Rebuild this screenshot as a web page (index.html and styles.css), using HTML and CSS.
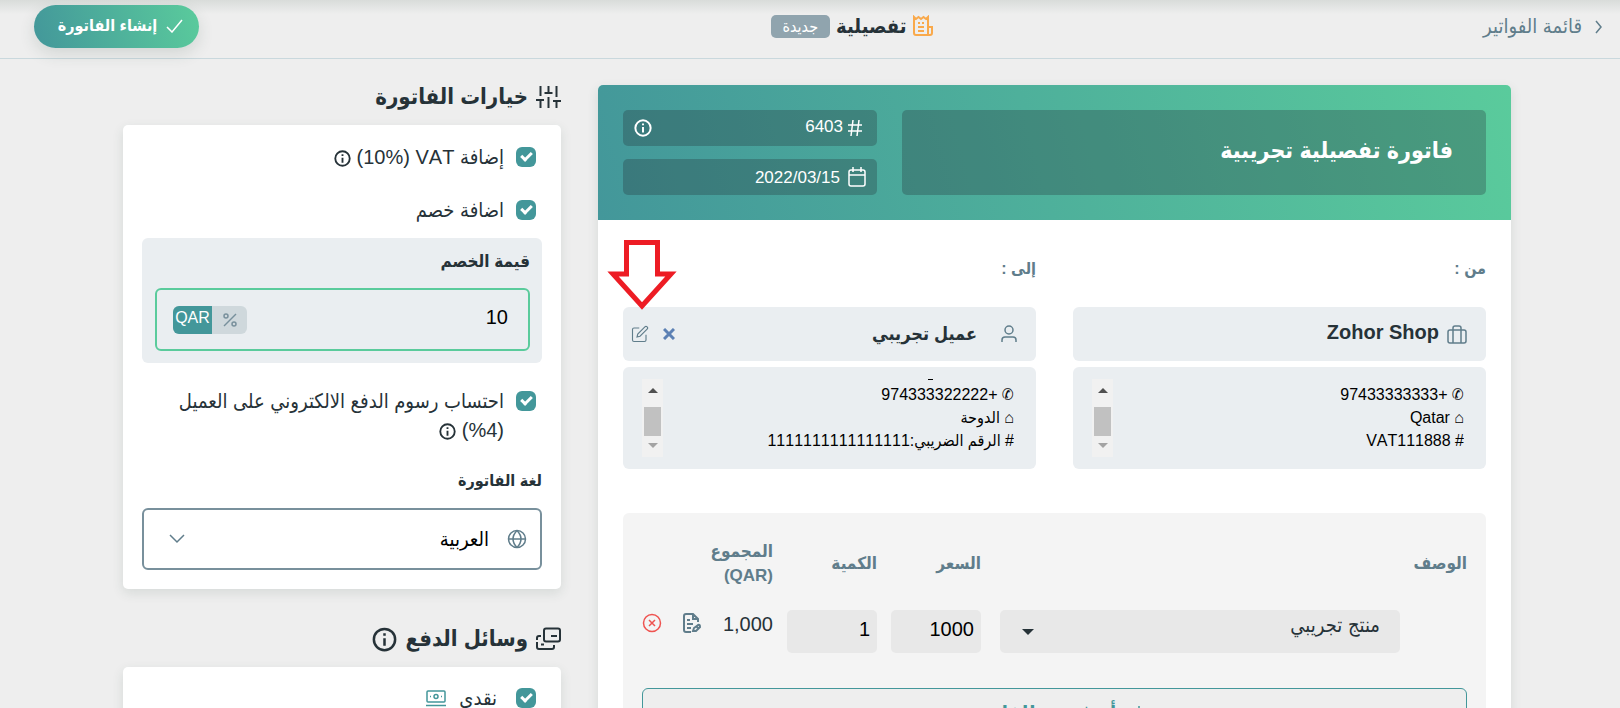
FILE: index.html
```html
<!DOCTYPE html>
<html lang="ar" dir="rtl">
<head>
<meta charset="utf-8">
<title>فاتورة تفصيلية</title>
<link rel="stylesheet" href="styles.css">
</head>
<body>
<header class="topbar">
  <a class="back" href="#">
    <svg class="icon" width="10" height="14" viewBox="0 0 10 14"><path d="M2 1l5 6-5 6"/></svg>
    قائمة الفواتير
  </a>
  <div class="doc-type">
    <svg class="icon doc-icon" width="22" height="22" viewBox="0 0 22 22"><path d="M16 12V2l-2 2-2.500-2L9 4 6.500 2 4 4 2 2v16q0 2 2 2h14q2 0 2-2v-6h-4v8M6 8h2M10 8h2M6 12h6M6 16h6"/></svg>
    <h1 class="doc-title">تفصيلية</h1>
    <span class="badge">جديدة</span>
  </div>
  <button class="create" type="button">
    <svg class="icon" width="17" height="14" viewBox="0 0 17 14"><path d="M1 8l5 5L16 1"/></svg>
    إنشاء الفاتورة
  </button>
</header>

<main class="page">
  <section class="card invoice">
    <div class="banner">
      <input class="banner-box banner-title" type="text" value="فاتورة تفصيلية تجريبية" aria-label="عنوان الفاتورة">
      <div class="banner-side">
        <div class="banner-box banner-field">
          <svg class="icon hash" width="16" height="18" viewBox="0 0 16 18"><path d="M6 1L4 17M12 1l-2 16M1 6h14M1 12h14"/></svg>
          <input class="banner-input number" type="text" value="6403" aria-label="رقم الفاتورة">
          <svg class="icon info" width="18" height="18" viewBox="0 0 20 20"><circle cx="10" cy="10" r="8.500"/><path d="M10 9v6M10 5v2"/></svg>
        </div>
        <div class="banner-box banner-field">
          <svg class="icon" width="18" height="20" viewBox="0 0 18 20"><rect x="1" y="3" width="16" height="16" rx="2"/><path d="M1 8h16M5 0v5M13 0v5"/></svg>
          <input class="banner-input date" type="text" value="2022/03/15" aria-label="تاريخ الفاتورة">
        </div>
      </div>
    </div>

    <div class="parties">
      <div class="party">
        <h2 class="party-label">من :</h2>
        <div class="party-name from">
          <svg class="icon" width="20" height="19" viewBox="0 0 20 19"><rect x="1" y="5" width="18" height="13" rx="2"/><path d="M6 18V3q0-2 2-2h4q2 0 2 2v15"/></svg>
          <strong class="name">Zohor Shop</strong>
        </div>
        <div class="party-details">
          <textarea class="details" rows="3" aria-label="بيانات المرسل">✆ +97433333333
⌂ Qatar
# VAT111888</textarea>
          <div class="scroll"><span class="scroll-up"></span><span class="scroll-thumb"></span><span class="scroll-down"></span></div>
        </div>
      </div>
      <div class="party">
        <h2 class="party-label">إلى :</h2>
        <div class="party-name to">
          <svg class="icon" width="16" height="18" viewBox="0 0 16 18"><circle cx="8" cy="5" r="4"/><path d="M1 17v-2q0-3 3-3h8q3 0 3 3v2"/></svg>
          <strong class="name">عميل تجريبي</strong>
          <button class="icon-btn clear" type="button" aria-label="إزالة">
            <svg class="icon" width="12" height="12" viewBox="0 0 12 12"><path d="M1 1l10 10M11 1L1 11"/></svg>
          </button>
          <button class="icon-btn edit" type="button" aria-label="تعديل">
            <svg class="icon" width="18" height="18" viewBox="0 0 24 24"><path d="M11 4H4a2 2 0 0 0-2 2v14a2 2 0 0 0 2 2h14a2 2 0 0 0 2-2v-7M18.500 2.500a2.100 2.100 0 0 1 3 3L12 15l-4 1 1-4z"/></svg>
          </button>
          <svg class="arrow" width="70" height="72" viewBox="0 0 70 72"><path d="M19.500 3.500h31V35H64L35 67 6 35h13.500z"/></svg>
        </div>
        <div class="party-details">
          <span class="clipped-line"></span>
          <textarea class="details" rows="3" aria-label="بيانات العميل">✆ +974333322222
⌂ الدوحة
# الرقم الضريبي:1111111111111111</textarea>
          <div class="scroll"><span class="scroll-up"></span><span class="scroll-thumb"></span><span class="scroll-down"></span></div>
        </div>
      </div>
    </div>

    <div class="items">
      <table class="items-table">
        <thead>
          <tr>
            <th class="col-desc">الوصف</th>
            <th class="col-num">السعر</th>
            <th class="col-num">الكمية</th>
            <th class="col-total">المجموع (QAR)</th>
            <th class="col-actions"></th>
          </tr>
        </thead>
        <tbody>
          <tr>
            <td class="col-desc">
              <div class="product">
                <select class="product-select" aria-label="المنتج"><option>منتج تجريبي</option></select>
                <span class="caret"></span>
              </div>
            </td>
            <td class="col-num"><input class="num" type="text" value="1000" aria-label="السعر"></td>
            <td class="col-num"><input class="num" type="text" value="1" aria-label="الكمية"></td>
            <td class="col-total">1,000</td>
            <td class="col-actions">
              <div class="actions">
                <button class="icon-btn note" type="button" aria-label="ملاحظة">
                  <svg class="icon" width="18" height="20" viewBox="0 0 18 20"><path d="M8 19H3q-2 0-2-2V3q0-2 2-2h7l5 5v3M10 1v5h5M4 7h3M4 11h6M4 15h4M10 18l1-3 4-3q2-1 2 2l-4 4zM13 13l2 2"/></svg>
                </button>
                <button class="icon-btn remove" type="button" aria-label="حذف">
                  <svg class="icon" width="20" height="20" viewBox="0 0 20 20"><circle cx="10" cy="10" r="8.500"/><path d="M7 7l6 6M13 7l-6 6"/></svg>
                </button>
              </div>
            </td>
          </tr>
        </tbody>
      </table>
      <button class="add-item" type="button">
        <svg class="icon" width="14" height="14" viewBox="0 0 14 14"><path d="M7 0v14M0 7h14"/></svg>
        أضف بند للفاتورة
      </button>
    </div>
  </section>

  <aside class="side">
    <h2 class="side-title">
      <svg class="icon" width="25" height="22" viewBox="0 0 25 22"><path d="M4.500 0v10M4.500 14v8M0 14h8M12.500 0v7M12.500 11v11M8.500 7h8M20.500 0v11M20.500 15v7M17 15h8"/></svg>
      خيارات الفاتورة
    </h2>
    <div class="card options">
      <div class="check">
        <input class="box" type="checkbox" id="vat" checked>
        <label class="check-text" for="vat">إضافة VAT <bdi dir="rtl">(10%)</bdi> <svg class="icon info" width="17" height="17" viewBox="0 0 20 20"><circle cx="10" cy="10" r="8.500"/><path d="M10 9v6M10 5v2"/></svg></label>
      </div>
      <div class="check">
        <input class="box" type="checkbox" id="discount" checked>
        <label class="check-text" for="discount">اضافة خصم</label>
      </div>
      <div class="discount">
        <label class="field-label" for="amount">قيمة الخصم</label>
        <div class="amount">
          <input class="amount-input" type="text" id="amount" value="10">
          <div class="units">
            <button class="unit" type="button" aria-label="%"><svg class="icon" width="14" height="14" viewBox="0 0 14 14"><circle cx="3" cy="3" r="2"/><circle cx="11" cy="11" r="2"/><path d="M13 1L1 13"/></svg></button>
            <button class="unit active" type="button">QAR</button>
          </div>
        </div>
      </div>
      <div class="check">
        <input class="box" type="checkbox" id="fees" checked>
        <label class="check-text" for="fees">احتساب رسوم الدفع الالكتروني على العميل (4%) <svg class="icon info" width="17" height="17" viewBox="0 0 20 20"><circle cx="10" cy="10" r="8.500"/><path d="M10 9v6M10 5v2"/></svg></label>
      </div>
      <label class="field-label language-label" for="language">لغة الفاتورة</label>
      <div class="language">
        <svg class="icon" width="20" height="20" viewBox="0 0 20 20"><circle cx="10" cy="10" r="8.500"/><path d="M1.500 10h17M10 1.500q8 8.500 0 17M10 1.500q-8 8.500 0 17"/></svg>
        <select class="language-select" id="language"><option>العربية</option></select>
        <svg class="icon" width="16" height="10" viewBox="0 0 16 10"><path d="M1 1l7 7 7-7"/></svg>
      </div>
    </div>

    <h2 class="side-title payment-title">
      <svg class="icon" width="25" height="24" viewBox="0 0 25 24"><rect x="8" y="1.500" width="16" height="13" rx="2"/><path d="M15 9h6M5 9H3q-2 0-2 2v2M1 15v5q0 2 2 2h13q2 0 2-2v-2M5 17.500h3"/></svg>
      وسائل الدفع
      <svg class="icon info" width="25" height="25" viewBox="0 0 20 20"><circle cx="10" cy="10" r="8.500"/><path d="M10 9v6M10 5v2"/></svg>
    </h2>
    <div class="card payments">
      <div class="check">
        <input class="box" type="checkbox" id="cash" checked>
        <label class="check-text cash" for="cash">نقدي
          <svg class="icon" width="20" height="20" viewBox="0 0 20 20"><rect x="1" y="1" width="18" height="11" rx="1"/><circle cx="10" cy="6.500" r="2"/><path d="M4 6.500h1M15 6.500h1M0 15.500h20M0 19h20"/></svg>
        </label>
      </div>
    </div>
  </aside>
</main>
</body>
</html>
```
FILE: styles.css
```css
* {
  box-sizing: border-box;
}

body {
  margin: 0;
  height: 100vh;
  overflow: hidden;
  background: #eee;
  color: #263238;
  font-family: "Liberation Sans", "DejaVu Sans Condensed", "DejaVu Sans", sans-serif;
  font-size: 20px;
  font-kerning: none;
  line-height: 29px;
}

button,
input,
select,
textarea {
  margin: 0;
  padding: 0;
  border: 0;
  background: none;
  color: inherit;
  font: inherit;
  font-kerning: none;
}

h1,
h2 {
  margin: 0;
}

.icon {
  flex: none;
  fill: none;
  stroke: currentColor;
  stroke-width: 1.5;
}

.icon.info {
  stroke-width: 2.2;
}

.icon-btn {
  display: flex;
}

.card {
  background: #fff;
  border-radius: 5px;
  box-shadow: 0 4px 12px rgba(40, 70, 60, 0.12);
}

/* Top bar */
.topbar {
  display: grid;
  grid-template-columns: 10fr auto 11fr;
  align-items: start;
  height: 59px;
  padding: 5px 16px 0 34px;
  border-bottom: 1px solid #c9d8dd;
  background: linear-gradient(#d9dcda, #eee 14px);
}

.back {
  display: flex;
  align-items: center;
  gap: 12px;
  padding-top: 7px;
  color: #607d8b;
  text-decoration: none;
}

.doc-type {
  display: flex;
  align-items: center;
  gap: 6px;
  padding-top: 7px;
}

.doc-icon {
  color: #f9a94b;
  stroke-width: 2;
}

.doc-title {
  font-size: 20px;
  line-height: 28px;
}

.badge {
  padding: 0 12px;
  border-radius: 5px;
  background: #90a4ae;
  color: #fff;
  font-size: 16px;
  line-height: 23px;
}

.create {
  display: flex;
  align-items: center;
  justify-content: center;
  justify-self: end;
  gap: 9px;
  width: 165px;
  height: 43px;
  padding: 0 0 2px 8px;
  border-radius: 22px;
  background: linear-gradient(75deg, #43979a, #5acb9c);
  box-shadow: 0 6px 16px rgba(40, 70, 60, 0.14);
  color: #fff;
  font-size: 16px;
  font-weight: bold;
}

/* Page columns */
.page {
  display: grid;
  grid-template-columns: minmax(0, 913fr) minmax(0, 438fr);
  gap: 37px;
  padding: 0 109px 0 123px;
}

/* Invoice banner */
.invoice {
  margin-top: 26px;
}

.banner {
  display: grid;
  grid-template-columns: minmax(0, 584fr) minmax(0, 254fr);
  gap: 25px;
  padding: 25px;
  border-radius: 5px 5px 0 0;
  background: linear-gradient(75deg, #43979a, #5acb9c);
  color: #fff;
}

.banner-side {
  display: grid;
  grid-template-columns: minmax(0, 1fr);
  gap: 13px;
}

.banner-box {
  border-radius: 5px;
  background: rgba(38, 50, 56, 0.3);
}

.banner-title {
  width: 100%;
  padding: 0 33px 4px;
  font-size: 23px;
  font-weight: bold;
}

.banner-field {
  display: flex;
  align-items: center;
  height: 36px;
  padding: 0 11px;
}

.banner-input {
  flex: 1;
  min-width: 0;
  padding: 0 8px;
  font-size: 17px;
}

.hash {
  margin-right: 3px;
}

.number {
  padding: 0 4px 4px;
}

/* Sender and client */
.parties {
  display: grid;
  grid-template-columns: minmax(0, 1fr) minmax(0, 1fr);
  gap: 37px;
  padding: 37px 25px 0;
}

.party-label {
  margin-bottom: 26px;
  color: #607d8b;
  font-size: 16px;
  line-height: 24px;
}

.party-name {
  position: relative;
  display: flex;
  align-items: center;
  gap: 8px;
  height: 54px;
  padding: 0 19px 0 8px;
  border-radius: 6px;
  background: #eaeef1;
  color: #607d8b;
}

.name {
  flex: 1;
  color: #263238;
  font-size: 20px;
}

.from .name {
  padding-bottom: 4px;
}

.to .name {
  padding-right: 16px;
  font-size: 18px;
}

.clear {
  color: #5c80b4;
}

.edit {
  margin-right: 6px;
}

.clear .icon {
  stroke-width: 3;
}

.arrow {
  position: absolute;
  left: -16px;
  bottom: 50px;
  fill: #fff;
  stroke: #ed1c24;
  stroke-width: 5;
}

.party-details {
  position: relative;
  display: flex;
  align-items: flex-start;
  margin-top: 6px;
  padding: 12px 22px 12px 19px;
  border-radius: 6px;
  background: #eaeef1;
}

.details {
  flex: 1;
  min-width: 0;
  height: 78px;
  padding-top: 4px;
  overflow: hidden;
  resize: none;
  color: #000;
  font-size: 16px;
  line-height: 23px;
}

.clipped-line {
  position: absolute;
  top: 12px;
  right: 103px;
  width: 5px;
  height: 1px;
  background: #000;
}

.scroll {
  display: flex;
  flex-direction: column;
  align-items: center;
  width: 21px;
  height: 78px;
  padding: 9px 0;
  background: #f1f1f1;
}

.scroll-up,
.scroll-down {
  border: 5px solid transparent;
  border-top-width: 0;
  border-bottom-color: #505050;
}

.scroll-down {
  border-top: 5px solid #a3a3a3;
  border-bottom-width: 0;
}

.scroll-thumb {
  width: 17px;
  height: 29px;
  margin: 14px 0 7px;
  background: #c1c1c1;
}

/* Line items */
.items {
  margin: 44px 25px 25px;
  padding: 27px 19px;
  border-radius: 6px;
  background: #f4f4f4;
}

.items-table {
  width: 100%;
  table-layout: fixed;
  border-collapse: collapse;
}

.items-table th {
  height: 70px;
  padding: 0 0 22px;
  color: #607d8b;
  font-size: 17px;
  line-height: 24px;
  text-align: start;
}

.items-table td {
  padding: 0;
  vertical-align: top;
}

.items-table .col-num {
  width: 104px;
}

.items-table td.col-num {
  padding-left: 14px;
}

.items-table td.col-desc {
  padding: 0 67px 0 19px;
}

.items-table .col-total {
  width: 72px;
}

.items-table .col-actions {
  width: 59px;
}

.product {
  display: flex;
  align-items: center;
  height: 43px;
  padding-left: 22px;
  border-radius: 5px;
  background: #e8e8e8;
}

.product-select {
  flex: 1;
  height: 100%;
  padding: 0 20px 12px;
  appearance: none;
}

.caret {
  border: 6px solid transparent;
  border-top-color: #263238;
  border-bottom-width: 0;
}

.num {
  display: block;
  width: 100%;
  height: 43px;
  padding: 0 7px 4px;
  border-radius: 5px;
  background: #e8e8e8;
  color: #000;
}

.actions {
  display: flex;
  justify-content: space-between;
  padding-top: 3px;
}

.note {
  color: #607d8b;
}

.note .icon {
  stroke-width: 2;
}

.remove {
  color: #ef5350;
}

.add-item {
  display: flex;
  align-items: center;
  justify-content: center;
  gap: 16px;
  width: 100%;
  height: 50px;
  margin-top: 35px;
  border: 1px solid #43979a;
  border-radius: 6px;
  background: #eee;
  color: #43979a;
  font-weight: bold;
}

/* Side column */
.side-title {
  display: flex;
  align-items: center;
  gap: 8px;
  padding: 22px 0 12px;
  font-size: 22px;
  line-height: 32px;
}

.side-title .icon {
  stroke-width: 2;
}

.payment-title {
  padding: 34px 0 12px;
}

.options {
  padding: 18px 19px 19px;
}

.payments {
  height: 200px;
  padding: 17px 19px;
}

.check {
  display: flex;
  align-items: flex-start;
  gap: 12px;
  padding: 0 6px;
  margin-bottom: 24px;
}

.box {
  display: grid;
  flex: none;
  place-items: center;
  width: 20px;
  height: 20px;
  margin-top: 4px;
  border-radius: 6px;
  background: #43979a;
  appearance: none;
}

.box::after {
  content: "";
  box-sizing: border-box;
  width: 7px;
  height: 11px;
  margin-bottom: 3px;
  border: solid #fff;
  border-width: 0 3px 3px 0;
  transform: rotate(45deg);
}

.check-text .icon {
  vertical-align: middle;
}

.cash {
  padding-right: 7px;
}

.cash .icon {
  margin-right: 8px;
  color: #43979a;
}

.discount {
  margin: -11px 0 24px;
  padding: 12px 12px 12px 13px;
  border-radius: 6px;
  background: #eaeef1;
}

.field-label {
  display: block;
  font-size: 17px;
  font-weight: bold;
  line-height: 24px;
}

.language-label {
  font-size: 16px;
}

.amount {
  display: flex;
  align-items: center;
  height: 63px;
  margin-top: 14px;
  padding: 0 20px 0 16px;
  border: 2px solid #5acb9c;
  border-radius: 6px;
}

.amount-input {
  flex: 1;
  min-width: 0;
  padding-bottom: 4px;
  color: #000;
}

.units {
  display: flex;
  height: 28px;
  overflow: hidden;
  border-radius: 6px;
  background: #cfd8dc;
  color: #78909c;
}

.unit {
  display: flex;
  align-items: center;
  justify-content: center;
  width: 35px;
  font-size: 16px;
}

.unit.active {
  width: 39px;
  padding-bottom: 4px;
  background: #43979a;
  color: #fff;
}

.language {
  display: flex;
  align-items: center;
  height: 62px;
  margin-top: 15px;
  padding: 0 13px 0 25px;
  border: 2px solid #78909c;
  border-radius: 6px;
  color: #607d8b;
}

.language-select {
  flex: 1;
  height: 100%;
  padding: 0 18px;
  color: #000;
  appearance: none;
}
```
